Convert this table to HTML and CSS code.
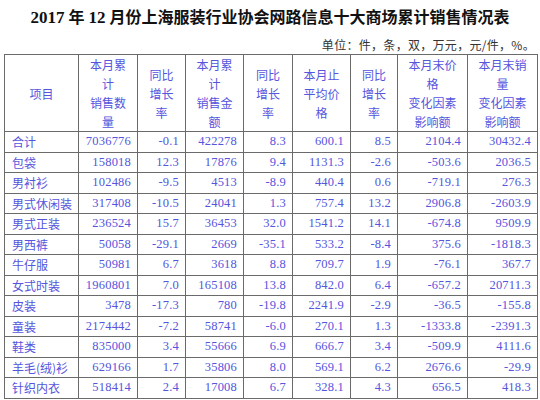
FILE: index.html
```html
<!DOCTYPE html>
<html lang="zh">
<head>
<meta charset="utf-8">
<link rel="stylesheet" href="styles.css">
</head>
<body>
<h1 class="title"><span class="num">2017</span> 年 <span class="num">12</span> 月份上海服装行业协会网路信息十大商场累计销售情况表</h1>
<div class="unit">单位：件，条，双，万元，元/件，%。</div>
<table class="data">
<colgroup>
<col class="w1"><col class="w2"><col class="w3"><col class="w4"><col class="w5"><col class="w6"><col class="w7"><col class="w8"><col class="w9">
</colgroup>
<thead>
<tr>
<th>项目</th>
<th>本月累<br>计<br>销售数<br>量</th>
<th>同比<br>增长<br>率</th>
<th>本月累<br>计<br>销售金<br>额</th>
<th>同比<br>增长<br>率</th>
<th>本月止<br>平均价<br>格</th>
<th>同比<br>增长<br>率</th>
<th>本月末价<br>格<br>变化因素<br>影响额</th>
<th>本月末销<br>量<br>变化因素<br>影响额</th>
</tr>
</thead>
<tbody>
<tr><td>合计</td><td>7036776</td><td>-0.1</td><td>422278</td><td>8.3</td><td>600.1</td><td>8.5</td><td>2104.4</td><td>30432.4</td></tr>
<tr><td>包袋</td><td>158018</td><td>12.3</td><td>17876</td><td>9.4</td><td>1131.3</td><td>-2.6</td><td>-503.6</td><td>2036.5</td></tr>
<tr><td>男衬衫</td><td>102486</td><td>-9.5</td><td>4513</td><td>-8.9</td><td>440.4</td><td>0.6</td><td>-719.1</td><td>276.3</td></tr>
<tr><td>男式休闲装</td><td>317408</td><td>-10.5</td><td>24041</td><td>1.3</td><td>757.4</td><td>13.2</td><td>2906.8</td><td>-2603.9</td></tr>
<tr><td>男式正装</td><td>236524</td><td>15.7</td><td>36453</td><td>32.0</td><td>1541.2</td><td>14.1</td><td>-674.8</td><td>9509.9</td></tr>
<tr><td>男西裤</td><td>50058</td><td>-29.1</td><td>2669</td><td>-35.1</td><td>533.2</td><td>-8.4</td><td>375.6</td><td>-1818.3</td></tr>
<tr><td>牛仔服</td><td>50981</td><td>6.7</td><td>3618</td><td>8.8</td><td>709.7</td><td>1.9</td><td>-76.1</td><td>367.7</td></tr>
<tr><td>女式时装</td><td>1960801</td><td>7.0</td><td>165108</td><td>13.8</td><td>842.0</td><td>6.4</td><td>-657.2</td><td>20711.3</td></tr>
<tr><td>皮装</td><td>3478</td><td>-17.3</td><td>780</td><td>-19.8</td><td>2241.9</td><td>-2.9</td><td>-36.5</td><td>-155.8</td></tr>
<tr><td>童装</td><td>2174442</td><td>-7.2</td><td>58741</td><td>-6.0</td><td>270.1</td><td>1.3</td><td>-1333.8</td><td>-2391.3</td></tr>
<tr><td>鞋类</td><td>835000</td><td>3.4</td><td>55666</td><td>6.9</td><td>666.7</td><td>3.4</td><td>-509.9</td><td>4111.6</td></tr>
<tr><td>羊毛(绒)衫</td><td>629166</td><td>1.7</td><td>35806</td><td>8.0</td><td>569.1</td><td>6.2</td><td>2676.6</td><td>-29.9</td></tr>
<tr><td>针织内衣</td><td>518414</td><td>2.4</td><td>17008</td><td>6.7</td><td>328.1</td><td>4.3</td><td>656.5</td><td>418.3</td></tr>
</tbody>
</table>
</body>
</html>
```

FILE: styles.css
```css
html, body {
  margin: 0;
  padding: 0;
  background: #ffffff;
}
body {
  width: 540px;
  height: 400px;
  overflow: hidden;
  font-family: "Noto Sans CJK SC", sans-serif;
}
.title {
  margin: 7px 0 0 0;
  height: 22px;
  line-height: 22px;
  text-align: center;
  font-size: 16px;
  font-weight: bold;
  color: #111111;
  font-family: "Liberation Serif", "Noto Sans CJK SC", serif;
  white-space: nowrap;
}
.title .num {
  font-family: "Liberation Serif", serif;
  font-size: 17px;
}
.unit {
  margin-top: 7px;
  height: 18px;
  line-height: 18px;
  padding-right: 5px;
  text-align: right;
  font-size: 12px;
  color: #333333;
  letter-spacing: 0.3px;
}
.data {
  margin-left: 4px;
  border-collapse: collapse;
  table-layout: fixed;
  width: 533px;
  color: #5555dd;
  font-size: 12px;
}
.w1 { width: 74px; }
.w2 { width: 59px; }
.w3 { width: 48px; }
.w4 { width: 58px; }
.w5 { width: 49px; }
.w6 { width: 58px; }
.w7 { width: 47px; }
.w8 { width: 70px; }
.w9 { width: 70px; }
.data th, .data td {
  border: 1px solid #6a6a6a;
  padding: 0;
}
.data th {
  height: 75px;
  font-weight: normal;
  line-height: 19px;
  text-align: center;
  vertical-align: middle;
}
.data td {
  height: 19.5px;
  line-height: 19px;
  text-align: right;
  padding-right: 6px;
  font-family: "Liberation Serif", serif;
  font-size: 12.5px;
  letter-spacing: 0.2px;
  white-space: nowrap;
}
.data td:first-child {
  text-align: left;
  padding-left: 7px;
  padding-right: 0;
  font-family: "Noto Sans CJK SC", sans-serif;
  font-size: 12px;
  letter-spacing: 0;
}
```
